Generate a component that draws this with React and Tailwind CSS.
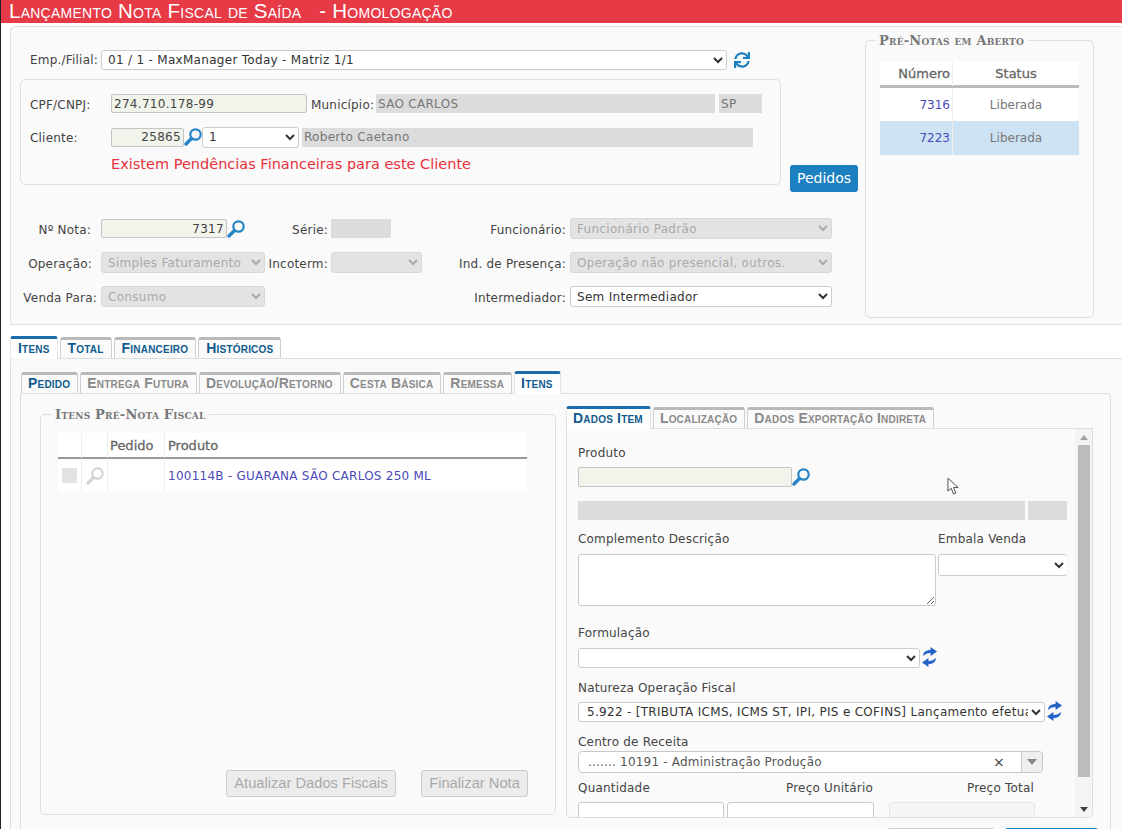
import React from 'react';
import { FaSync } from 'react-icons/fa';

const verdana = '[font-family:"DejaVu_Sans",sans-serif]';

function Lupa({ className = 'text-[#2583c6]' }) {
  return (
    <svg viewBox="0 0 18 18" className={`w-[18px] h-[18px] shrink-0 ${className}`} fill="none" stroke="currentColor">
      <circle cx="11.5" cy="6.5" r="5.2" strokeWidth="2.2" />
      <path d="M7.5 10.5 L2 16" strokeWidth="3.4" strokeLinecap="round" />
    </svg>
  );
}

function Atualiza() {
  return (
    <svg viewBox="0 0 14 20" preserveAspectRatio="none" className="w-[15px] h-[20px] -mt-[2px] shrink-0 text-[#2563c9]" fill="currentColor">
      <path d="M1 9 C1 5 4 3 8 3 V0 L14 4.5 L8 9 V6 C5 6 3 7 1 9 Z" />
      <path d="M13 11 C13 15 10 17 6 17 V20 L0 15.5 L6 11 V14 C9 14 11 13 13 11 Z" />
    </svg>
  );
}

function Label({ children, className = '' }) {
  return <label className={`text-[12px] text-[#444] tracking-[0.2px] whitespace-nowrap ${className}`}>{children}</label>;
}

function Caixa({ className = '', children, verde, cinza }) {
  const cor = verde
    ? 'bg-[#f1f4ea] border border-[#c4c4c4] rounded-[2px] text-[#444]'
    : cinza
      ? 'bg-[#dcdcdc] text-[#777]'
      : 'bg-white border border-[#ccc]';
  return <div className={`flex items-center px-[2px] text-[12px] tracking-[0.3px] ${cor} ${className}`}>{children}</div>;
}

function Combo({ value, disabled, className = '', children }) {
  return (
    <select
      disabled={disabled}
      defaultValue={value}
      className={`text-[12px] tracking-[0.3px] pl-[2px] rounded-[3px] border ${disabled ? 'bg-[#e3e3e3] border-[#d8d8d8] text-[#aaa]' : 'bg-white border-[#ccc] text-[#333]'} ${className}`}
    >
      {value !== undefined && <option value={value}>{value}</option>}
      {children}
    </select>
  );
}

function Aba({ children, ativa, cinza, largo }) {
  return (
    <div
      className={`[font-family:"Liberation_Sans",sans-serif] font-bold [font-variant:small-caps] text-[14px] tracking-[0.2px] leading-none pb-[3px] flex items-center whitespace-nowrap rounded-t-[3px] border-x border-t-[3px] ${
        largo ? 'px-[7px]' : 'pl-[6px] pr-[7px]'
      } ${
        ativa
          ? 'bg-white border-t-[#1b6ca8] border-x-[#e4e4e4] h-[23px] -mb-px'
          : 'bg-[#fafafa] border-t-[#b9b9b9] border-x-[#cfcfcf] h-[21px]'
      } ${cinza && !ativa ? 'text-[#8a8a8a]' : 'text-[#0f5a8e]'}`}
    >
      {children}
    </div>
  );
}

function Legenda({ children, className = '' }) {
  return (
    <div className={`absolute -top-[7px] bg-[#fafafa] px-[4px] [font-family:"DejaVu_Serif",serif] font-bold [font-variant:small-caps] text-[13px] tracking-[0.2px] leading-[14px] text-[#777] ${className}`}>
      {children}
    </div>
  );
}

function Botao({ children, className = '' }) {
  return (
    <div className={`h-[27px] flex items-center justify-center border border-[#ccc] rounded-[3px] bg-[#ececec] text-[#a9a9a9] text-[14.7px] [font-family:"Liberation_Sans",sans-serif] ${className}`}>
      {children}
    </div>
  );
}

export default function App() {
  return (
    <div className={`relative h-[829px] overflow-hidden bg-white border-l border-l-[#222] ${verdana}`}>
      <header className="h-[23px] bg-[#e63a46] pl-[8px] flex items-center text-white [font-family:'Liberation_Sans',sans-serif] [font-variant:small-caps] text-[20.5px] tracking-[0.25px] leading-none whitespace-pre">
        Lançamento Nota Fiscal de Saída   - Homologação
      </header>

      {/* cabeçalho da nota */}
      <section className="mt-[3px] ml-[9px] h-[299px] bg-[#fafafa] border border-r-0 border-[#e0e0e0] rounded-tl-[6px] flex">
        <div className="w-[854px] shrink-0 pl-[9px]">
          <div className="mt-[23px] h-[20px] flex items-center">
            <Label className="w-[78px] text-right">Emp./Filial:</Label>
            <Combo value="01 / 1 - MaxManager Today - Matriz 1/1" className="ml-[3px] w-[626px] h-[20px]" />
            <FaSync className="ml-[7px] text-[#1b7fc0] text-[16px]" />
          </div>

          <div className="mt-[9px] flex items-end">
            <div className="w-[761px] h-[106px] border border-[#ddd] rounded-[5px] pl-[9px]">
              <div className="mt-[14px] h-[19px] flex items-center">
                <Label className="w-[81px] mt-[2px]">CPF/CNPJ:</Label>
                <Caixa verde className="w-[196px] h-[19px]">274.710.178-99</Caixa>
                <Label className="ml-[4px] w-[65px] mt-[2px]">Município:</Label>
                <Caixa cinza className="w-[339px] h-[19px]">SAO CARLOS</Caixa>
                <Caixa cinza className="ml-[4px] w-[43px] h-[19px]">SP</Caixa>
              </div>
              <div className="mt-[14px] h-[20px] flex items-center">
                <Label className="w-[81px] mt-[2px]">Cliente:</Label>
                <Caixa verde className="w-[73px] h-[19px] justify-end">25865</Caixa>
                <Lupa />
                <Combo value="1" className="w-[97px] h-[21px]" />
                <Caixa cinza className="ml-[3px] w-[451px] h-[19px]">Roberto Caetano</Caixa>
              </div>
              <p className="mt-[7px] ml-[81px] text-[14.5px] leading-[20px] text-[#e8303c] whitespace-nowrap">
                Existem Pendências Financeiras para este Cliente
              </p>
            </div>
            <button className="ml-[9px] -mb-[7px] w-[68px] h-[27px] shrink-0 bg-[#1b7fc0] rounded-[3px] text-white text-[14px]">
              Pedidos
            </button>
          </div>

          <div className="mt-[33px] grid grid-cols-[81px_164px_66px_92px_147px_262px] gap-y-[13px] items-center">
            <Label className="text-right pr-[10px] mt-[2px]">Nº Nota:</Label>
            <div className="flex items-center">
              <Caixa verde className="w-[126px] h-[19px] justify-end">7317</Caixa>
              <Lupa />
            </div>
            <Label className="text-right pr-[3px] mt-[2px]">Série:</Label>
            <Caixa cinza className="w-[60px] h-[19px]" />
            <Label className="text-right pr-[4px] mt-[2px]">Funcionário:</Label>
            <Combo disabled value="Funcionário Padrão" className="h-[21px]" />

            <Label className="text-right pr-[9px] mt-[2px]">Operação:</Label>
            <Combo disabled value="Simples Faturamento" className="h-[21px]" />
            <Label className="text-right pr-[3px] mt-[2px]">Incoterm:</Label>
            <Combo disabled className="w-[91px] h-[21px]" />
            <Label className="text-right pr-[4px] mt-[2px]">Ind. de Presença:</Label>
            <Combo disabled value="Operação não presencial, outros." className="h-[21px]" />

            <Label className="text-right pr-[4px] mt-[2px]">Venda Para:</Label>
            <Combo disabled value="Consumo" className="h-[21px]" />
            <div />
            <div />
            <Label className="text-right pr-[4px] mt-[2px]">Intermediador:</Label>
            <Combo value="Sem Intermediador" className="h-[21px]" />
          </div>
        </div>

        {/* pré-notas */}
        <div className="relative mt-[13px] w-[229px] h-[278px] border border-[#ddd] rounded-[5px] pl-[14px] pt-[21px]">
          <Legenda className="left-[9px]">Pré-Notas em Aberto</Legenda>
          <div className="w-[199px] bg-white text-[12px]">
            <div className="h-[26px] grid grid-cols-[73px_1fr] border-b-[3px] border-b-[#bbb] text-[#666] text-[13px] leading-[24px] [-webkit-text-stroke:0.3px_#666]">
              <div className="text-right pr-[2px] border-r border-[#eee]">Número</div>
              <div className="text-center">Status</div>
            </div>
            <div className="h-[33px] grid grid-cols-[73px_1fr] items-center">
              <div className="h-full flex items-center justify-end pr-[2px] border-r border-[#eee] text-[#4a4ab8]">7316</div>
              <div className="text-center text-[#777]">Liberada</div>
            </div>
            <div className="h-[34px] grid grid-cols-[73px_1fr] items-center bg-[#cde2f3]">
              <div className="h-full flex items-center justify-end pr-[2px] border-r border-[#eee] text-[#4a4ab8]">7223</div>
              <div className="text-center text-[#777]">Liberada</div>
            </div>
          </div>
        </div>
      </section>

      {/* abas principais */}
      <div className="mt-[11px] ml-[9px] flex gap-[2px] items-end">
        <Aba largo ativa>Itens</Aba>
        <Aba largo>Total</Aba>
        <Aba largo>Financeiro</Aba>
        <Aba largo>Históricos</Aba>
      </div>
      <section className="ml-[9px] h-[480px] bg-[#fafafa] border border-r-0 border-[#ddd] rounded-tl-[5px] pl-[9px] pt-[12px]">
        <div className="flex gap-[2px] items-end ml-px">
          <Aba>Pedido</Aba>
          <Aba cinza>Entrega Futura</Aba>
          <Aba cinza>Devolução/Retorno</Aba>
          <Aba cinza>Cesta Básica</Aba>
          <Aba cinza>Remessa</Aba>
          <Aba ativa>Itens</Aba>
        </div>

        <div className="w-[1091px] h-[440px] bg-[#fafafa] border border-[#ddd] rounded-tr-[5px] flex pl-[19px] pt-[20px]">
          {/* itens */}
          <div className="relative w-[516px] h-[401px] border border-[#ddd] rounded-[5px] pl-[17px] pt-[18px]">
            <Legenda className="left-[10px]">Itens Pré-Nota Fiscal</Legenda>
            <div className="w-[469px] bg-white text-[12px]">
              <div className="h-[26px] grid grid-cols-[24px_26px_57px_1fr] border-b-2 border-b-[#999] text-[13px] text-[#666] leading-[25px] [-webkit-text-stroke:0.3px_#666]">
                <div className="border-r border-[#eee]" />
                <div className="border-r border-[#eee]" />
                <div className="border-r border-[#eee] pl-[2px]">Pedido</div>
                <div className="pl-[3px]">Produto</div>
              </div>
              <div className="h-[33px] grid grid-cols-[24px_26px_57px_1fr] items-center">
                <div className="h-full flex items-center justify-center border-r border-[#eee]">
                  <div className="w-[15px] h-[15px] bg-[#e2e2e2]" />
                </div>
                <div className="h-full flex items-center justify-center border-r border-[#eee]">
                  <Lupa className="text-[#d4d4d4]" />
                </div>
                <div className="h-full border-r border-[#eee]" />
                <div className="pl-[3px] text-[#4a4ab8] tracking-[0.25px]">100114B - GUARANA SÃO CARLOS 250 ML</div>
              </div>
            </div>
            <div className="mt-[278px] flex pl-[168px] gap-[25px]">
              <Botao className="w-[170px]">Atualizar Dados Fiscais</Botao>
              <Botao className="w-[107px]">Finalizar Nota</Botao>
            </div>
          </div>

          {/* dados do item */}
          <div className="ml-[10px] -mt-[8px] w-[527px]">
            <div className="flex gap-[2px] items-end">
              <Aba ativa>Dados Item</Aba>
              <Aba cinza>Localização</Aba>
              <Aba cinza>Dados Exportação Indireta</Aba>
            </div>
            <div className="h-[390px] bg-[#fafafa] border border-[#ddd] rounded-b-[5px] flex overflow-hidden">
              <div className="w-[500px] shrink-0 overflow-hidden pl-[11px] text-[12px] text-[#444]">
                <div className="w-[490px] tracking-[0.2px]">
                  <div className="mt-[16px] leading-[16px]">Produto</div>
                  <div className="mt-[6px] flex items-center">
                    <Caixa verde className="w-[214px] h-[20px]" />
                    <Lupa />
                  </div>
                  <div className="mt-[14px] flex gap-[3px]">
                    <Caixa cinza className="w-[447px] h-[19px] shrink-0" />
                    <Caixa cinza className="w-[39px] h-[19px] shrink-0" />
                  </div>
                  <div className="mt-[11px] flex leading-[16px]">
                    <div className="w-[360px]">Complemento Descrição</div>
                    <div>Embala Venda</div>
                  </div>
                  <div className="mt-[7px] flex items-start gap-[2px]">
                    <textarea className="w-[358px] h-[52px] bg-white border border-[#ccc] rounded-[3px] block" />
                    <Combo className="w-[130px] h-[22px] shrink-0" />
                  </div>
                  <div className="mt-[19px] leading-[16px]">Formulação</div>
                  <div className="mt-[7px] flex items-center gap-[2px]">
                    <Combo className="w-[342px] h-[20px]" />
                    <Atualiza />
                  </div>
                  <div className="mt-[12px] leading-[16px]">Natureza Operação Fiscal</div>
                  <div className="mt-[6px] flex items-center gap-[2px]">
                    <Combo
                      value="5.922 - [TRIBUTA ICMS, ICMS ST, IPI, PIS e COFINS] Lançamento efetuado a título de simples faturamento"
                      className="w-[467px] h-[20px] pl-[4px]"
                    />
                    <Atualiza />
                  </div>
                  <div className="mt-[12px] leading-[16px]">Centro de Receita</div>
                  <div className="mt-px w-[465px] h-[22px] bg-white border border-[#c8c8c8] rounded-[4px] flex items-center pl-[9px] text-[#555]">
                    <span className="flex-1">....... 10191 - Administração Produção</span>
                    <span className="w-[28px] text-[14px] text-[#444]">×</span>
                    <div className="w-[21px] h-full bg-[#eeeeee] border-l border-[#ccc] rounded-r-[4px] flex items-center justify-center">
                      <div className="w-0 h-0 border-x-[5px] border-x-transparent border-t-[6px] border-t-[#888]" />
                    </div>
                  </div>
                  <div className="mt-[7px] flex leading-[16px]">
                    <div className="w-[146px]">Quantidade</div>
                    <div className="w-[149px] text-right">Preço Unitário</div>
                    <div className="w-[161px] text-right">Preço Total</div>
                  </div>
                  <div className="mt-[6px] flex">
                    <div className="w-[146px] h-[30px] bg-white border border-[#ccc] rounded-[3px]" />
                    <div className="ml-[3px] w-[147px] h-[30px] bg-white border border-[#ccc] rounded-[3px]" />
                    <div className="ml-[15px] w-[146px] h-[30px] bg-[#f5f5f5] border border-[#e6e6e6] rounded-[3px]" />
                  </div>
                </div>
              </div>
              {/* barra de rolagem */}
              <div className="ml-[8px] w-[17px] flex flex-col items-center bg-[#f4f4f4]">
                <div className="h-[16px] flex items-center justify-center">
                  <div className="w-0 h-0 border-x-[4px] border-x-transparent border-b-[5px] border-b-[#a0a0a0]" />
                </div>
                <div className="w-[12px] h-[332px] bg-[#bcbcbc]" />
                <div className="flex-1 flex items-end pb-[5px]">
                  <div className="w-0 h-0 border-x-[4px] border-x-transparent border-t-[5px] border-t-[#444]" />
                </div>
              </div>
            </div>
            <div className="mt-[10px] ml-[321px] flex gap-[10px]">
              <div className="w-[108px] h-[27px] shrink-0 bg-[#ececec] border border-[#ccc] rounded-[3px]" />
              <div className="w-[93px] h-[27px] shrink-0 bg-[#1b7fc0] rounded-[3px]" />
            </div>
          </div>
        </div>
      </section>

      {/* ponteiro do mouse */}
      <svg viewBox="0 0 14 20" className="absolute left-[946px] top-[477px] w-[13px] h-[19px]" fill="#fff" stroke="#444" strokeWidth="1">
        <path d="M1 1 V15 L4.5 12 L7 18 L9.5 17 L7 11 H12 Z" />
      </svg>
    </div>
  );
}
